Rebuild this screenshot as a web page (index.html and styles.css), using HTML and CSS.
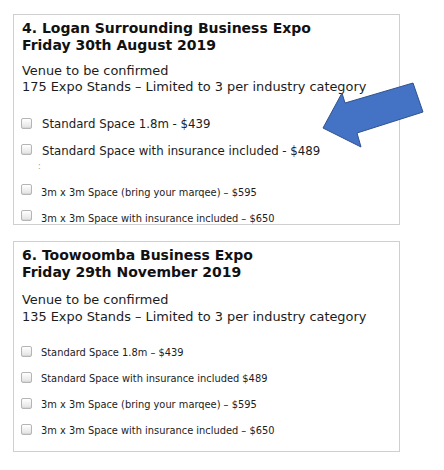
FILE: index.html
```html
<!DOCTYPE html>
<html>
<head>
<meta charset="utf-8">
<link rel="stylesheet" href="styles.css">
</head>
<body>
<div class="page">
  <section class="expo expo-first">
    <h2 class="title">4. Logan Surrounding Business Expo<br>Friday 30th August 2019</h2>
    <p class="info">Venue to be confirmed<br>175 Expo Stands – Limited to 3 per industry category</p>
    <label class="opt opt-lg opt-first"><span class="box"></span><span class="txt">Standard Space 1.8m - $439</span></label>
    <label class="opt opt-lg"><span class="box"></span><span class="txt">Standard Space with insurance included - $489</span></label>
    <div class="stray">:</div>
    <label class="opt opt-sm opt-after-stray"><span class="box"></span><span class="txt">3m x 3m Space (bring your marqee) – $595</span></label>
    <label class="opt opt-sm"><span class="box"></span><span class="txt">3m x 3m Space with insurance included – $650</span></label>
  </section>
  <section class="expo expo-second">
    <h2 class="title">6. Toowoomba Business Expo<br>Friday 29th November 2019</h2>
    <p class="info info-wide">Venue to be confirmed<br>135 Expo Stands – Limited to 3 per industry category</p>
    <label class="opt opt-sm opt-first"><span class="box"></span><span class="txt">Standard Space 1.8m – $439</span></label>
    <label class="opt opt-sm"><span class="box"></span><span class="txt">Standard Space with insurance included $489</span></label>
    <label class="opt opt-sm"><span class="box"></span><span class="txt">3m x 3m Space (bring your marqee) – $595</span></label>
    <label class="opt opt-sm"><span class="box"></span><span class="txt">3m x 3m Space with insurance included – $650</span></label>
  </section>
  <svg class="arrow" width="444" height="470" viewBox="0 0 444 470">
    <polygon points="323,128 342,93 345,103 413,83 423,112 357,133 361,147" fill="#4472c4" stroke="#2f528f" stroke-width="1"/>
  </svg>
</div>
</body>
</html>
```

FILE: styles.css
```css
* { box-sizing: border-box; }
html, body { margin: 0; padding: 0; background: #fff; }
body {
  font-family: "DejaVu Sans", sans-serif;
  color: #1c1c1c;
  width: 444px;
  height: 470px;
  overflow: hidden;
}
.page {
  position: relative;
  padding: 14px 0 0 13px;
  display: flex;
  flex-direction: column;
  gap: 16px;
}
.expo {
  width: 387px;
  height: 211px;
  border: 1px solid #cfcfcf;
  padding: 0 8px;
  overflow: hidden;
  display: flex;
  flex-direction: column;
  align-items: flex-start;
}
.title {
  margin: 5px 0 0;
  font-size: 14px;
  line-height: 17px;
  font-weight: bold;
  color: #111;
}
.info {
  margin: 9px 0 0;
  font-size: 12.9px;
  line-height: 16px;
}
.info-wide {
  margin-top: 9.5px;
  line-height: 17px;
}
.opt {
  display: flex;
  align-items: flex-start;
  height: 18px;
  line-height: 18px;
  margin-top: 8px;
  white-space: nowrap;
}
.opt-lg { margin-top: 9px; font-size: 11.75px; }
.opt-sm { font-size: 9.85px; }
.expo-first .opt-first { margin-top: 20px; }
.expo-second .opt-first { margin-top: 19.5px; }
.box {
  flex: none;
  width: 11px;
  height: 11px;
  margin-left: -1px;
  margin-top: 2px;
  border: 1px solid #b5b5b5;
  border-radius: 2px;
  background: linear-gradient(#ffffff, #e2e2e2);
  box-shadow: inset 0 -1px 1px rgba(0,0,0,0.06);
}
.opt-lg .box { margin-top: 3px; }
.opt-lg + .opt-lg .box { margin-top: 2px; }
.opt-lg .txt { margin-left: 10px; }
.opt-sm .txt { margin-left: 9px; }
.expo-first .opt-sm .box { margin-top: 0; }
.stray {
  margin-top: 3px;
  padding-left: 16px;
  height: 8px;
  font-size: 8px;
  line-height: 8px;
  color: #999;
}
.opt-after-stray { margin-top: 13px; }
.arrow {
  position: absolute;
  left: 0;
  top: 0;
  pointer-events: none;
}
```
